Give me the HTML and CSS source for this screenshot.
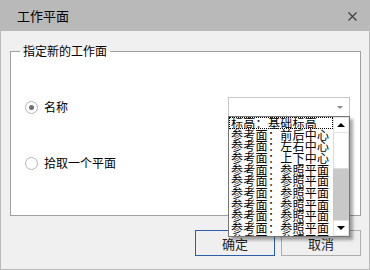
FILE: index.html
```html
<!DOCTYPE html>
<html lang="zh-CN">
<head>
  <meta charset="UTF-8" />
  <meta name="viewport" content="width=device-width, initial-scale=1.0"/>
  <title>工作平面</title>
  <link rel="stylesheet" href="styles.css">
</head>
<body>
  <div class="dialog">
    <div class="titlebar">
      <span class="title">工作平面</span>
      <svg class="close" width="9" height="9" viewBox="0 0 9 9">
        <path d="M0.5 0.5 L8.5 8.5 M8.5 0.5 L0.5 8.5" stroke="#3c3c3c" stroke-width="1.1" fill="none"/>
      </svg>
    </div>

    <div class="body">
      <fieldset class="group">
        <legend>指定新的工作面</legend>

        <div class="row">
          <label class="option"><span class="radio checked"></span>名称</label>
          <div class="combo">
            <span class="combo-arrow"></span>

            <!-- open dropdown list -->
            <div class="dropdown">
              <ul class="list">
                <li class="focused">标高：基础标高</li>
                <li>参考面：前后中心</li>
                <li>参考面：左右中心</li>
                <li>参考面：上下中心</li>
                <li>参考面：参照平面</li>
                <li>参考面：参照平面</li>
                <li>参考面：参照平面</li>
                <li>参考面：参照平面</li>
                <li>参考面：参照平面</li>
                <li>参考面：参照平面</li>
                <li>参考面：参照平面</li>
              </ul>
              <div class="scrollbar">
                <div class="sb-btn"><span class="tri up"></span></div>
                <div class="sb-thumb"></div>
                <div class="sb-track"></div>
                <div class="sb-btn"><span class="tri down"></span></div>
              </div>
            </div>
          </div>
        </div>

        <div class="row">
          <label class="option"><span class="radio"></span>拾取一个平面</label>
        </div>
      </fieldset>

      <div class="actions">
        <button class="btn primary">确定</button>
        <button class="btn">取消</button>
      </div>
    </div>
  </div>
</body>
</html>
```

FILE: styles.css
```css
body {
  margin: 0;
  font-family: "Noto Sans CJK SC", "Liberation Sans", sans-serif;
  font-size: 12px;
  color: #000;
  background: #f0f0f0;
}

.dialog {
  width: 370px;
  height: 270px;
  box-sizing: border-box;
  border: 1px solid #b9b9b9;
  border-top: none;
  background: #f0f0f0;
}

.titlebar {
  height: 31px;
  background: #b9b9b9;
  display: flex;
  align-items: center;
  justify-content: space-between;
  padding: 0 12px 0 16px;
}

.title {
  font-size: 13px;
  line-height: 16px;
  margin-top: 1px;
}

.close {
  display: block;
  margin-top: 1px;
}

.body {
  padding: 0 8px 0 9px;
}

/* group box */
.group {
  margin: 12px 0 0;
  padding: 38px 10px 0 9px;
  height: 173px;
  box-sizing: border-box;
  border: 1px solid #a0a0a0;
  background: #fff;
}

.group legend {
  padding: 0 3px;
  line-height: 16px;
  font-size: 12px;
}

.row {
  display: flex;
  align-items: center;
  height: 20px;
}

.row + .row {
  margin-top: 36px;
}

.option {
  display: flex;
  align-items: center;
  gap: 6px;
  margin-left: 5px;
  line-height: 16px;
}

.radio {
  width: 13px;
  height: 13px;
  box-sizing: border-box;
  border: 1px solid #b4b4b4;
  border-radius: 50%;
  background: #fff;
  display: flex;
  align-items: center;
  justify-content: center;
}

.radio.checked::after {
  content: "";
  width: 5px;
  height: 5px;
  border-radius: 50%;
  background: #707070;
}

/* combobox */
.combo {
  position: relative;
  margin-left: auto;
  width: 122px;
  height: 20px;
  box-sizing: border-box;
  border: 1px solid #c6c6c6;
  background: #fff;
}

.combo-arrow {
  position: absolute;
  right: 6px;
  top: 8px;
  border-left: 3px solid transparent;
  border-right: 3px solid transparent;
  border-top: 3px solid #8a8a8a;
}

.dropdown {
  position: absolute;
  left: -1px;
  top: 18px;
  width: 122px;
  height: 121px;
  box-sizing: border-box;
  border: 1px solid #767676;
  background: #fff;
  display: flex;
  box-shadow: 3px 3px 3px rgba(0, 0, 0, 0.35);
  z-index: 2;
}

.list {
  list-style: none;
  margin: 0;
  padding: 0;
  flex: 1;
  overflow: hidden;
}

.list li {
  height: 11.67px;
  line-height: 11.67px;
  padding-left: 2px;
  white-space: nowrap;
  font-size: 12px;
  letter-spacing: 0.3px;
}

.list li.focused {
  outline: 1px dotted #000;
  outline-offset: -1px;
}

.scrollbar {
  width: 16px;
  display: flex;
  flex-direction: column;
}

.sb-btn {
  height: 16px;
  box-sizing: border-box;
  border: 1px solid #e3e3e3;
  background: #fff;
  display: flex;
  align-items: center;
  justify-content: center;
}

.sb-thumb {
  height: 36px;
  box-sizing: border-box;
  border: 1px solid #dcdcdc;
  border-top: none;
  background: #fff;
}

.sb-track {
  flex: 1;
  background: #c8c8c8;
}

.tri {
  border-left: 4px solid transparent;
  border-right: 4px solid transparent;
}

.tri.up {
  border-bottom: 4px solid #000;
}

.tri.down {
  border-top: 4px solid #000;
}

/* buttons */
.actions {
  display: flex;
  justify-content: flex-end;
  gap: 6px;
  margin-top: 14px;
}

.btn {
  width: 80px;
  height: 26px;
  box-sizing: border-box;
  border: 1px solid #adadad;
  background: #efefef;
  font-family: inherit;
  font-size: 13px;
  color: #222;
  padding: 0;
}

.btn.primary {
  border-color: #2a5ea8;
}
```
